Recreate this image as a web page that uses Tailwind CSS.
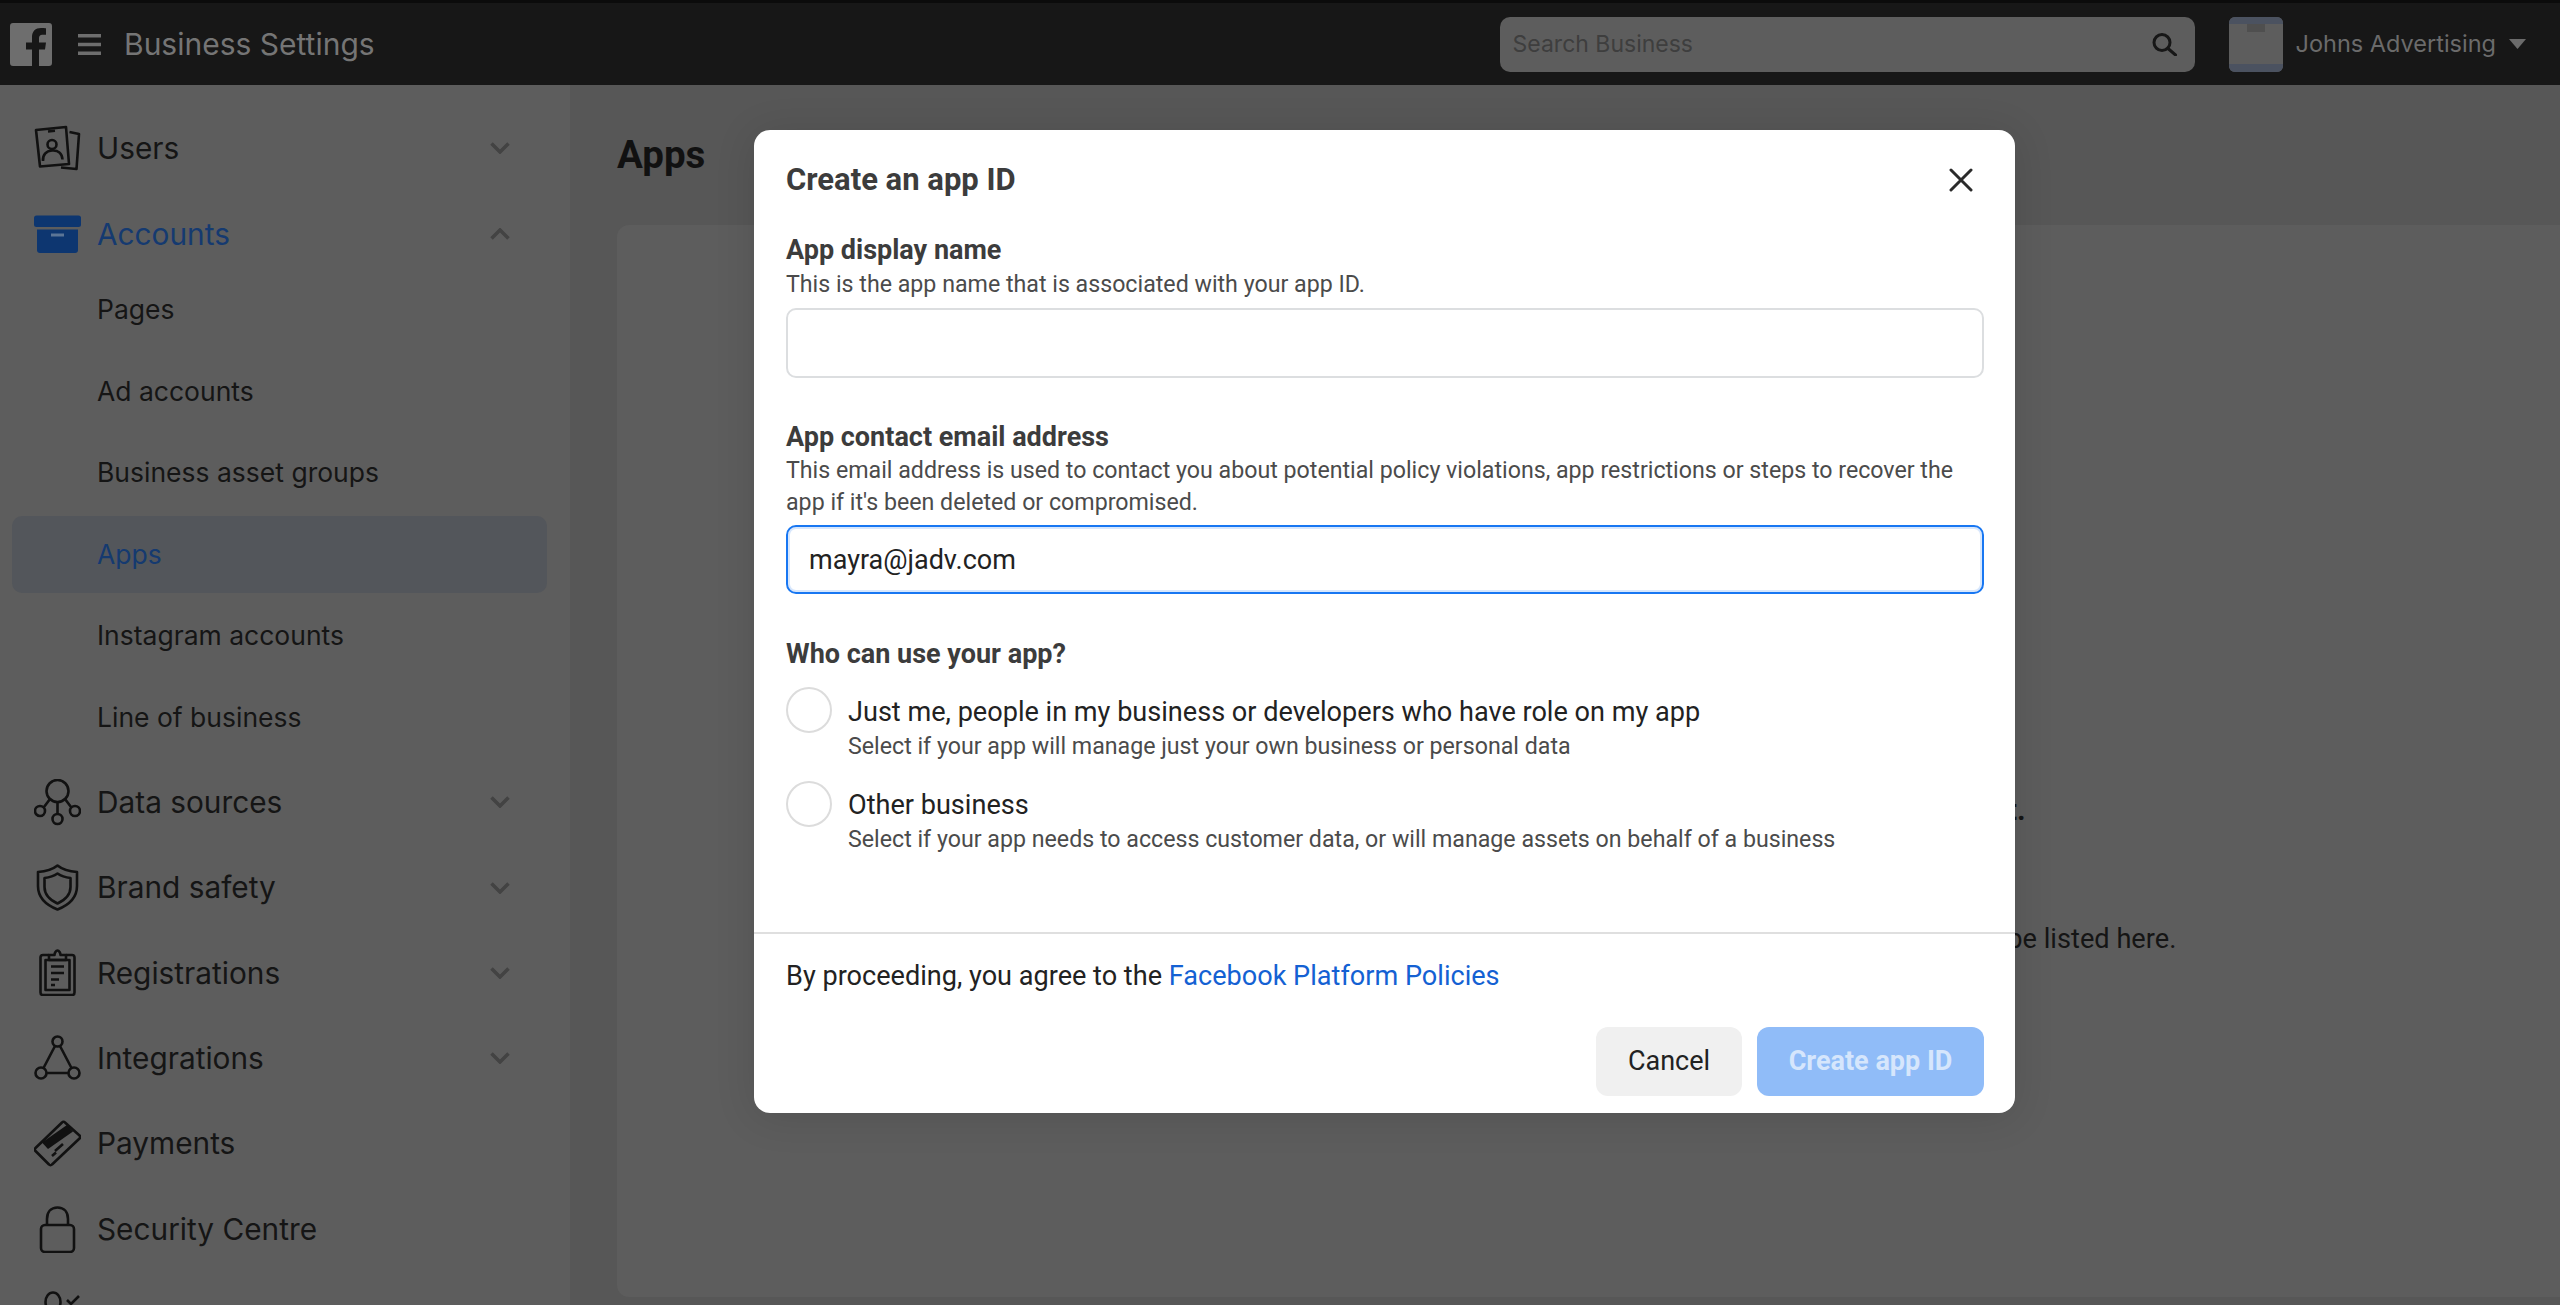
<!DOCTYPE html>
<html lang="en">
<head>
    <meta charset="UTF-8">
    <title>Business Settings</title>
    <script src="https://cdn.jsdelivr.net/npm/@tailwindcss/browser@4"></script>
</head>
<body class="relative h-[1305px] overflow-hidden bg-[#575757] font-['Inter',sans-serif]">
    <!-- Top bar -->
    <header class="flex h-[85px] items-center border-t-[3px] border-[#0b0b0b] bg-[#171717]">
        <svg class="ml-[10px] h-[43px] w-[42px]" viewBox="0 0 42 43">
            <path fill="#6e6e6e" d="M3 0h36a3 3 0 0 1 3 3v37a3 3 0 0 1-3 3H29V26.500h6l1-7h-7V15c0-2 1-3.300 3.300-3.300H36V5.300C35 5.100 33 5 31 5c-5.500 0-9 3.300-9 9v5.500h-6v7h6V43H3a3 3 0 0 1-3-3V3a3 3 0 0 1 3-3z"/>
        </svg>
        <svg class="ml-[26px] h-[21px] w-[23px]" viewBox="0 0 23 21">
            <path fill="#6e6e6e" d="M0 0h23v3.500H0zM0 8.700h23v3.500H0zM0 17.500h23V21H0z"/>
        </svg>
        <span class="ml-[23px] text-[30px] leading-none text-[#757575]">Business Settings</span>
        <div class="ml-auto flex h-[55px] w-[695px] items-center justify-between rounded-[10px] bg-[#5d5d5d] pl-[13px] pr-[17px]">
            <span class="text-[23px] text-[#3e3e3e]">Search Business</span>
            <svg class="h-[23px] w-[26px]" viewBox="0 0 26 23" fill="none" stroke="#171717" stroke-width="3">
                <circle cx="10" cy="9.500" r="8"/><path d="M16 15.500l7.500 6.500" stroke-linecap="round"/>
            </svg>
        </div>
        <div class="ml-[34px] flex h-[55px] w-[54px] flex-col overflow-hidden rounded-[6px] bg-[#5d5d5d]">
            <div class="h-[7px] bg-[#4b5260]"></div>
            <div class="mx-auto h-[8px] w-[18px] bg-[#4f4f4f]"></div>
            <div class="mt-auto h-[8px] bg-[#4b5260]"></div>
        </div>
        <span class="ml-[13px] text-[23.500px] text-[#6b6b6b]">Johns Advertising</span>
        <svg class="ml-[13px] mr-[34px] h-[10px] w-[17px]" viewBox="0 0 17 10"><path fill="#6b6b6b" d="M0 0h17L8.500 10z"/></svg>
    </header>

    <div class="flex h-[1220px]">
        <!-- Sidebar -->
        <nav class="w-[570px] shrink-0 overflow-hidden bg-[#5d5d5d] pt-[20px] text-[#151515]">
            <a class="flex h-[86px] items-center pl-[34px] pr-[60px]">
                <svg class="h-[47px] w-[47px] shrink-0" viewBox="0 0 47 47" fill="none" stroke="#111" stroke-width="2.600" stroke-linejoin="round">
                    <path d="M2 5l30-3 3 37-29 2.500z"/>
                    <path d="M35.500 7l9.500 2-2.500 35-15.500-1.500"/>
                    <path d="M14 6.500l7-.7" stroke-width="2.400"/>
                    <circle cx="18" cy="19.500" r="4.500"/>
                    <path d="M9 36c-.5-6 3-10 9-10.500s10 3 10.500 9"/>
                </svg>
                <span class="ml-[16px] text-[29.800px]">Users</span>
                <svg class="ml-auto h-[12px] w-[20px]" viewBox="0 0 20 12" fill="none" stroke="#434343" stroke-width="3.500"><path d="M1.500 1.500L10 10l8.500-8.500"/></svg>
            </a>
            <a class="flex h-[86px] items-center pl-[34px] pr-[60px]">
                <svg class="h-[47px] w-[47px] shrink-0" viewBox="0 0 47 47">
                    <rect x="0" y="4.500" width="47" height="11.500" rx="2.500" fill="#0d3670"/>
                    <path fill="#0d3670" d="M3 18.500h41V39a3 3 0 0 1-3 3H6a3 3 0 0 1-3-3z"/>
                    <rect x="17" y="22.500" width="13" height="3" fill="#5b7596"/>
                </svg>
                <span class="ml-[16px] text-[29.800px] text-[#153a70]">Accounts</span>
                <svg class="ml-auto h-[12px] w-[20px]" viewBox="0 0 20 12" fill="none" stroke="#434343" stroke-width="3.500"><path d="M1.500 10.500L10 2l8.500 8.500"/></svg>
            </a>
            <ul class="-mt-[7.500px] mb-[1px] text-[26.500px]">
                <li class="flex h-[81.500px] items-center pl-[97px]">Pages</li>
                <li class="flex h-[81.500px] items-center pl-[97px]">Ad accounts</li>
                <li class="flex h-[81.500px] items-center pl-[97px]">Business asset groups</li>
                <li class="mx-[12px] my-[2.250px] flex h-[77px] w-[535px] items-center rounded-[10px] bg-[#53565b] pl-[85px] text-[#153a70]">Apps</li>
                <li class="flex h-[81.500px] items-center pl-[97px]">Instagram accounts</li>
                <li class="flex h-[81.500px] items-center pl-[97px]">Line of business</li>
            </ul>
            <a class="flex h-[85.400px] items-center pl-[34px] pr-[60px]">
                <svg class="h-[47px] w-[47px] shrink-0" viewBox="0 0 47 47" fill="none" stroke="#111" stroke-width="2.600">
                    <circle cx="23.500" cy="12" r="11"/><circle cx="6" cy="32" r="5"/><circle cx="23.500" cy="40" r="5"/><circle cx="41" cy="32" r="5"/>
                    <path d="M23.500 23v12M16 20l-6 8M31 20l6 8"/>
                </svg>
                <span class="ml-[16px] text-[29.800px]">Data sources</span>
                <svg class="ml-auto h-[12px] w-[20px]" viewBox="0 0 20 12" fill="none" stroke="#434343" stroke-width="3.500"><path d="M1.500 1.500L10 10l8.500-8.500"/></svg>
            </a>
            <a class="flex h-[85.400px] items-center pl-[34px] pr-[60px]">
                <svg class="h-[47px] w-[47px] shrink-0" viewBox="0 0 47 47" fill="none" stroke="#111" stroke-width="2.600" stroke-linejoin="round">
                    <path d="M23.500 1.500c5 4 12 6 19.500 6.500v14c0 11-8 19-19.500 23.500C12 41 4 33 4 22V8c7.500-.5 14.500-2.500 19.500-6.500z"/>
                    <path d="M23.500 9.500c3.500 2.500 8.500 4 13 4.500v9c0 7.500-5.500 13-13 16.500-7.500-3.500-13-9-13-16.500v-9c4.500-.5 9.500-2 13-4.500z"/>
                </svg>
                <span class="ml-[16px] text-[29.800px]">Brand safety</span>
                <svg class="ml-auto h-[12px] w-[20px]" viewBox="0 0 20 12" fill="none" stroke="#434343" stroke-width="3.500"><path d="M1.500 1.500L10 10l8.500-8.500"/></svg>
            </a>
            <a class="flex h-[85.400px] items-center pl-[34px] pr-[60px]">
                <svg class="h-[47px] w-[47px] shrink-0" viewBox="0 0 47 47" fill="none" stroke="#111" stroke-width="2.600" stroke-linejoin="round">
                    <path d="M15 6H9a2.500 2.500 0 0 0-2.500 2.500v35A2.500 2.500 0 0 0 9 46h29a2.500 2.500 0 0 0 2.500-2.500v-35A2.500 2.500 0 0 0 38 6h-6"/>
                    <path d="M15 11V6h5.500c0-2 1.500-4.500 3-4.500s3 2.500 3 4.500H32v5z"/>
                    <path d="M11.500 11h24v30h-24z"/>
                    <path d="M17 17.500h13M17 24h13M17 30.500h8M17 36h4"/>
                </svg>
                <span class="ml-[16px] text-[29.800px]">Registrations</span>
                <svg class="ml-auto h-[12px] w-[20px]" viewBox="0 0 20 12" fill="none" stroke="#434343" stroke-width="3.500"><path d="M1.500 1.500L10 10l8.500-8.500"/></svg>
            </a>
            <a class="flex h-[85.400px] items-center pl-[34px] pr-[60px]">
                <svg class="h-[47px] w-[47px] shrink-0" viewBox="0 0 47 47" fill="none" stroke="#111" stroke-width="2.600">
                    <circle cx="23.500" cy="6.500" r="5"/><circle cx="7" cy="38" r="5.500"/><circle cx="40" cy="38" r="5.500"/>
                    <path d="M21 11L9.500 33M26 11l11.500 22M12.500 38h22"/>
                </svg>
                <span class="ml-[16px] text-[29.800px]">Integrations</span>
                <svg class="ml-auto h-[12px] w-[20px]" viewBox="0 0 20 12" fill="none" stroke="#434343" stroke-width="3.500"><path d="M1.500 1.500L10 10l8.500-8.500"/></svg>
            </a>
            <a class="flex h-[85.400px] items-center pl-[34px] pr-[60px]">
                <svg class="h-[47px] w-[47px] shrink-0" viewBox="0 0 47 47" fill="none" stroke="#111" stroke-width="2.600" stroke-linejoin="round">
                    <path d="M31 2.500l14.500 13a2 2 0 0 1 0 3L18 44.500a2 2 0 0 1-3 0L1.500 31a2 2 0 0 1 0-3L28 2.500a2 2 0 0 1 3 0z"/>
                    <path d="M8 22.500L33 5l6 6.500L14 29z" fill="#111" stroke="none"/>
                    <path d="M21 31l8-7M18 36l4-3.500"/>
                </svg>
                <span class="ml-[16px] text-[29.800px]">Payments</span>
            </a>
            <a class="flex h-[85.400px] items-center pl-[34px] pr-[60px]">
                <svg class="h-[47px] w-[47px] shrink-0" viewBox="0 0 47 47" fill="none" stroke="#111" stroke-width="2.600">
                    <rect x="7" y="19" width="33" height="27" rx="4"/>
                    <path d="M13 19v-6c0-7 4-11.500 10.500-11.500S34 6 34 13v6"/>
                </svg>
                <span class="ml-[16px] text-[29.800px]">Security Centre</span>
            </a>
            <a class="flex h-[85.400px] items-center pl-[34px] pr-[60px]">
                <svg class="h-[47px] w-[47px] shrink-0" viewBox="0 0 47 47" fill="none" stroke="#111" stroke-width="2.600">
                    <ellipse cx="19" cy="11" rx="7.500" ry="9.500"/>
                    <path d="M33 9l4 4 8-8"/>
                </svg>
                <span class="ml-[16px] pt-[3px] text-[29.800px]">Requests</span>
            </a>
        </nav>

        <!-- Main -->
        <main class="flex min-w-0 flex-1 flex-col pl-[47px] font-['Roboto',sans-serif]">
            <h1 class="flex h-[140px] items-center text-[38.500px] font-bold text-[#111]">Apps</h1>
            <section class="flex h-[1072px] flex-col items-center rounded-l-[12px] bg-[#5d5d5d] text-[#151515]">
                <p class="mt-[563px] whitespace-nowrap text-[29.600px] font-bold leading-[44px]">Johns Advertising doesn't have any connected or owned apps yet.</p>
                <p class="mt-[87px] whitespace-nowrap text-[27.200px] leading-[40px]">Apps that your business owns or has been given access to by other businesses will be listed here.</p>
            </section>
        </main>
    </div>

    <!-- Modal -->
    <div class="absolute left-[754px] top-[130px] flex h-[983px] w-[1261px] flex-col rounded-[16px] bg-white font-['Roboto',sans-serif] shadow-[0_4px_40px_rgba(0,0,0,0.12)]">
        <div class="flex-1 pl-[32px] pr-[31px] pt-[30px]">
            <div class="flex h-[40px] items-center justify-between">
                <h2 class="text-[31px] font-bold text-[#3c3c3c]">Create an app ID</h2>
                <svg class="mr-[11px] h-[24px] w-[24px]" viewBox="0 0 24 24" fill="none" stroke="#2b2b2b" stroke-width="3" stroke-linecap="round"><path d="M2 2l20 20M22 2L2 22"/></svg>
            </div>

            <label class="mt-[33px] block text-[27px] font-bold leading-[34px] text-[#3c3c3c]">App display name</label>
            <p class="text-[23.200px] leading-[34px] text-[#4b4b4b]">This is the app name that is associated with your app ID.</p>
            <div class="mt-[7px] h-[70px] rounded-[10px] border-2 border-[#dcdee0]"></div>

            <label class="mt-[42px] block text-[27px] font-bold leading-[34px] text-[#3c3c3c]">App contact email address</label>
            <p class="text-[23.200px] leading-[32px] text-[#4b4b4b]">This email address is used to contact you about potential policy violations, app restrictions or steps to recover the app if it's been deleted or compromised.</p>
            <div class="mt-[6.500px] flex h-[69px] items-center rounded-[10px] border-2 border-[#1877f2] pl-[21px] pt-[2px] text-[27px] text-[#222] shadow-[inset_0_0_0_2px_#d8e7fc]">mayra@jadv.com</div>

            <label class="mt-[43px] block text-[27px] font-bold leading-[34px] text-[#3c3c3c]">Who can use your app?</label>
            <div class="mt-[16px] flex h-[94px]">
                <span class="h-[46px] w-[46px] shrink-0 rounded-full border-2 border-[#dcdcdc]"></span>
                <div class="ml-[16px] pt-[8px]">
                    <p class="text-[27.100px] leading-[34px] text-[#222]">Just me, people in my business or developers who have role on my app</p>
                    <p class="text-[23.200px] leading-[35px] text-[#4b4b4b]">Select if your app will manage just your own business or personal data</p>
                </div>
            </div>
            <div class="flex h-[94px]">
                <span class="h-[46px] w-[46px] shrink-0 rounded-full border-2 border-[#dcdcdc]"></span>
                <div class="ml-[16px] pt-[7px]">
                    <p class="text-[27.100px] leading-[34px] text-[#222]">Other business</p>
                    <p class="text-[23.200px] leading-[35px] text-[#4b4b4b]">Select if your app needs to access customer data, or will manage assets on behalf of a business</p>
                </div>
            </div>
        </div>

        <div class="h-[181px] border-t-2 border-[#dfdfdf] pl-[32px] pr-[31px]">
            <p class="mt-[24px] text-[27.100px] leading-[36px] text-[#222]">By proceeding, you agree to the <a class="text-[#1461d3]">Facebook Platform Policies</a></p>
            <div class="mt-[32.500px] flex justify-end gap-[15px]">
                <button class="h-[69px] w-[146px] rounded-[12px] bg-[#f0f0f0] text-[27px] text-[#222]">Cancel</button>
                <button class="h-[69px] w-[227px] rounded-[12px] bg-[#90bcf8] text-[27px] font-bold text-[#d6e6fc]">Create app ID</button>
            </div>
        </div>
    </div>
</body>
</html>
